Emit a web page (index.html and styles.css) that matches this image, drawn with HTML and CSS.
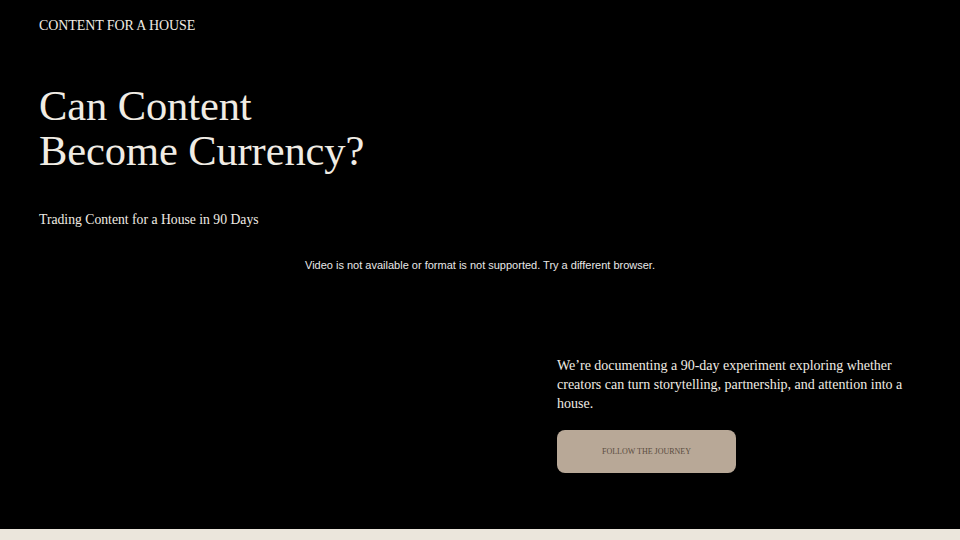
FILE: index.html
```html
<!DOCTYPE html>
<html lang="en">
<head>
<meta charset="utf-8">
<title>Content for a House</title>
<link rel="stylesheet" href="styles.css">
</head>
<body>
<section class="hero">
  <header class="brand">CONTENT FOR A HOUSE</header>
  <h1 class="title">Can Content<br>Become Currency?</h1>
  <p class="subtitle">Trading Content for a House in 90 Days</p>
  <div class="video-fallback">Video is not available or format is not supported. Try a different browser.</div>
  <div class="intro">
    <p class="intro-text">We’re documenting a 90-day experiment exploring whether creators can turn storytelling, partnership, and attention into a house.</p>
    <a class="cta" href="#">FOLLOW THE JOURNEY</a>
  </div>
</section>
<div class="strip"></div>
</body>
</html>
```

FILE: styles.css
```css
html, body {
  margin: 0;
  padding: 0;
}
body {
  background: #ebe6dc;
  font-family: "Liberation Serif", "DejaVu Serif", serif;
  color: #f0ece4;
}
.hero {
  height: 529px;
  box-sizing: border-box;
  background: #000;
  padding: 18px 39px 0;
  display: flex;
  flex-direction: column;
}
.brand {
  font-size: 14px;
  line-height: 16px;
  letter-spacing: -0.1px;
}
.title {
  margin: 49px 0 0;
  font-weight: 400;
  font-size: 42.5px;
  line-height: 45px;
  letter-spacing: -0.1px;
}
.subtitle {
  margin: 37px 0 0;
  font-size: 13.7px;
  line-height: 20px;
}
.video-fallback {
  margin-top: 27px;
  font-family: "Liberation Sans", Arial, sans-serif;
  font-size: 11px;
  line-height: 16px;
  text-align: center;
  color: #e8e8e8;
}
.intro {
  margin: 83px 0 0 518px;
  width: 362px;
  display: flex;
  flex-direction: column;
  align-items: flex-start;
}
.intro-text {
  margin: 0;
  font-size: 14px;
  line-height: 19px;
}
.cta {
  margin-top: 17px;
  width: 179px;
  height: 43px;
  border-radius: 8px;
  background: #b8a897;
  color: #5a4c3f;
  font-size: 8px;
  text-decoration: none;
  display: flex;
  align-items: center;
  justify-content: center;
}
.strip {
  height: 11px;
  background: #ebe6dc;
}
```
